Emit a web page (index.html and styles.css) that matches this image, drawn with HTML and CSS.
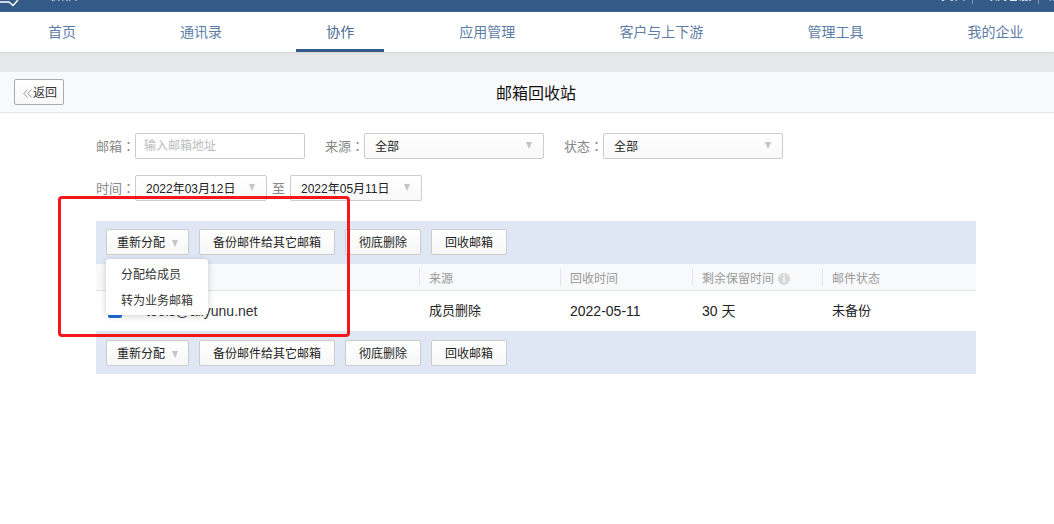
FILE: index.html
```html
<!DOCTYPE html>
<html lang="zh-CN">
<head>
    <meta charset="UTF-8">
    <title>邮箱回收站</title>
    <link rel="stylesheet" href="styles.css">
</head>
<body>
<div class="topbar">
    <div class="logo">
        <svg class="logo-icon" width="22" height="12" viewBox="0 0 22 12" fill="none" stroke="#fff" stroke-width="1.5">
            <path d="M0 2h9l4 3.5L18 0"/>
        </svg>
        <span>企业微信</span>
    </div>
    <div class="top-links">
        <span>API文档</span><i></i><span>专属客服</span><i></i><span>退出</span>
    </div>
</div>
<div class="nav">
    <a>首页</a>
    <a>通讯录</a>
    <a class="active">协作</a>
    <a>应用管理</a>
    <a>客户与上下游</a>
    <a>管理工具</a>
    <a>我的企业</a>
</div>
<div class="band"></div>
<div class="titlebar">
    <div class="btn back">
        <svg width="9" height="9" viewBox="0 0 9 9" fill="none" stroke="#999" stroke-width="1">
            <path d="M4.5 .5 .8 4.5l3.7 4M8.5 .5 4.8 4.5l3.7 4"/>
        </svg>
        返回
    </div>
    <div class="title">邮箱回收站</div>
</div>

<div class="content">
    <div class="filters">
        <span class="label" lang="zh-TW">邮箱：</span>
        <input class="text-input" placeholder="输入邮箱地址">
        <span class="label gap" lang="zh-TW">来源：</span>
        <div class="select wide">全部<b class="caret"></b></div>
        <span class="label gap" lang="zh-TW">状态：</span>
        <div class="select wide">全部<b class="caret"></b></div>
    </div>
    <div class="filters">
        <span class="label" lang="zh-TW">时间：</span>
        <div class="select date">2022年03月12日<b class="caret"></b></div>
        <span class="label to">至</span>
        <div class="select date">2022年05月11日<b class="caret"></b></div>
    </div>

    <div class="list">
        <div class="toolbar first">
            <div class="btn">重新分配<b class="caret small"></b></div>
            <div class="btn">备份邮件给其它邮箱</div>
            <div class="btn">彻底删除</div>
            <div class="btn">回收邮箱</div>
        </div>
        <div class="menu">
            <div>分配给成员</div>
            <div>转为业务邮箱</div>
        </div>
        <div class="thead row">
            <div></div>
            <div class="th">来源</div>
            <div class="th">回收时间</div>
            <div class="th">剩余保留时间<span class="info">i</span></div>
            <div class="th">邮件状态</div>
        </div>
        <div class="tbody row">
            <div class="email"><span class="check"></span>tools@aliyunu.net</div>
            <div class="td">成员删除</div>
            <div class="td num">2022-05-11</div>
            <div class="td num days">30 天</div>
            <div class="td">未备份</div>
        </div>
        <div class="toolbar">
            <div class="btn">重新分配<b class="caret small"></b></div>
            <div class="btn">备份邮件给其它邮箱</div>
            <div class="btn">彻底删除</div>
            <div class="btn">回收邮箱</div>
        </div>
    </div>
</div>

<div class="red-box"></div>
</body>
</html>
```

FILE: styles.css
```css
body {
    margin: 0;
    height: 524px;
    overflow: hidden;
    background: #fff;
    color: #222;
    font-family: "Liberation Sans", "Noto Sans CJK SC", sans-serif;
    font-size: 12px;
}

.topbar {
    height: 12px;
    background: #345a87;
    color: #fff;
    display: flex;
    justify-content: space-between;
    align-items: flex-end;
    overflow: hidden;
}
.logo {
    display: flex;
    align-items: flex-end;
    font-size: 14px;
    line-height: 20px;
}
.logo span { margin-bottom: 8px; }
.logo-icon { flex: none; }
.top-links {
    width: 132px;
    flex: none;
    display: flex;
    align-items: center;
    margin-bottom: 8px;
    line-height: 16px;
    overflow: hidden;
    white-space: nowrap;
}
.top-links i {
    flex: none;
    width: 1px;
    height: 16px;
    background: #7f97b5;
    margin: 0 10px 0 7px;
}
.top-links span { flex: none; }

.nav {
    height: 40px;
    background: #fff;
    display: flex;
    gap: 44.1px;
    padding-left: 18px;
    box-shadow: 0 1px 2px #d4d4d4;
    position: relative;
    font-size: 14px;
    color: #5d7da6;
}
.nav a {
    padding: 0 30px;
    line-height: 40px;
    white-space: nowrap;
}
.nav .active {
    margin-right: 1px;
    border-bottom: 3px solid #345a87;
    height: 37px;
    color: #4a6a94;
}

.band {
    height: 20px;
    background: #e7e8ea;
}

.titlebar {
    height: 40px;
    background: #f8f9fb;
    border-bottom: 1px solid #e6e7ea;
    display: flex;
    align-items: center;
    padding-left: 14px;
}
.title {
    flex: 1;
    padding-right: 46px;
    text-align: center;
    font-size: 16px;
    color: #111;
}

.btn {
    box-sizing: border-box;
    height: 26px;
    line-height: 22px;
    padding: 2px 13px 0;
    border: 1px solid #ccc;
    border-radius: 2px;
    background: linear-gradient(#fff, #f7f7f7);
    white-space: nowrap;
    display: flex;
    align-items: center;
}
.back {
    padding: 2px 6px 0 8px;
    gap: 1px;
    border-color: #aaa;
    color: #333;
}

.content {
    padding: 20px 78px 0 96px;
}
.filters {
    display: flex;
    align-items: center;
    height: 26px;
    margin-bottom: 16px;
}
.label {
    width: 39px;
    padding-bottom: 2px;
    font-family: "Liberation Sans", "Noto Sans CJK TC", sans-serif;
    font-size: 13px;
    color: #888;
    white-space: nowrap;
}
.label.gap { margin-left: 20px; }
.label.to { width: auto; margin: 0 5px; }
.text-input {
    width: 170px;
    height: 26px;
    box-sizing: border-box;
    border: 1px solid #ccc;
    border-radius: 2px;
    padding: 0 8px;
    font: inherit;
    outline: none;
}
.text-input::placeholder { color: #bbb; }
.select {
    height: 26px;
    box-sizing: border-box;
    border: 1px solid #ccc;
    border-radius: 2px;
    background: linear-gradient(#fff, #f8f8f8);
    padding: 0 10px 2px;
    display: flex;
    align-items: center;
    justify-content: space-between;
    white-space: nowrap;
}
.select.wide { width: 180px; }
.select.date { width: 132px; }

.caret {
    width: 0;
    height: 0;
    border-left: 3.5px solid transparent;
    border-right: 3.5px solid transparent;
    border-top: 7px solid #c4c4c4;
    margin-right: 1px;
}
.caret.small { margin: 0 0 0 7px; }

.list {
    position: relative;
    width: 880px;
    margin-top: 20px;
}
.toolbar {
    background: #dee7f3;
    display: flex;
    gap: 10px;
    padding: 9px 10px 8px;
}
.toolbar.first { padding: 8px 10px 9px; }
.toolbar .btn:first-child { padding: 2px 10px 0; }

.row {
    display: grid;
    grid-template-columns: 323px 141px 132px 130px 1fr;
}
.thead {
    height: 26px;
    background: #f8f9fb;
    border-bottom: 1px solid #e3e5e8;
    align-items: center;
    color: #999;
}
.th {
    box-sizing: border-box;
    height: 18px;
    line-height: 14px;
    border-left: 1px solid #e3e5e8;
    padding: 4px 0 0 9px;
    display: flex;
    align-items: center;
}
.info {
    width: 12px;
    height: 12px;
    margin-left: 4px;
    border-radius: 50%;
    background: #d8d8d8;
    color: #fff;
    font-size: 9px;
    font-weight: bold;
    line-height: 12px;
    text-align: center;
}
.tbody {
    height: 40px;
    align-items: center;
    font-size: 13px;
    color: #222;
}
.td {
    padding: 0 0 3px 10px;
}
.td.num {
    padding-bottom: 0;
    font-size: 14px;
}
.td.days { padding-bottom: 2px; }
.email {
    display: flex;
    align-items: center;
    font-size: 14px;
    color: #333;
}
.check {
    width: 14px;
    height: 14px;
    margin: 0 24px 0 12px;
    border-radius: 2px;
    background: #1f6fd6;
}

.menu {
    position: absolute;
    left: 10px;
    top: 38px;
    width: 102px;
    padding: 3px 0 1px;
    background: #fff;
    border-radius: 3px;
    box-shadow: 0 1px 6px rgba(0, 0, 0, .2);
    z-index: 2;
}
.menu div {
    height: 26px;
    line-height: 26px;
    padding-left: 15px;
    white-space: nowrap;
    color: #333;
}

.red-box {
    position: absolute;
    left: 58px;
    top: 196px;
    width: 286px;
    height: 135px;
    border: 3px solid #f4171b;
    border-radius: 4px;
    z-index: 3;
}
```
